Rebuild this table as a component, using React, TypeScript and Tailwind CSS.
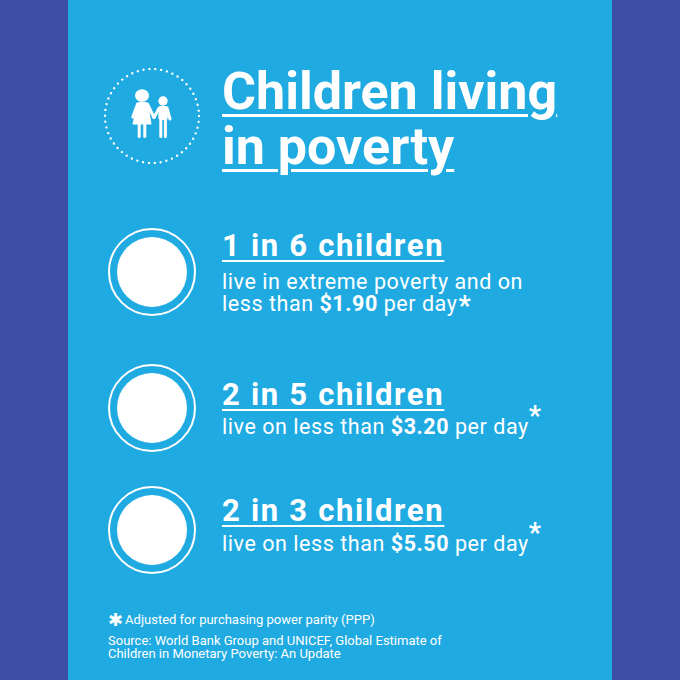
import React from "react";

const rows = [
  {
    head: "1 in 6 children",
    pre: "live in extreme poverty and on",
    pre2: "less than ",
    amount: "$1.90",
    rowMt: "mt-[54px]",
    textMt: "mt-[1px]",
    descMt: "mt-[8px]",
    star: "top-[4px] ml-[1px]",
  },
  {
    head: "2 in 5 children",
    pre: null,
    pre2: "live on less than ",
    amount: "$3.20",
    rowMt: "mt-[48px]",
    textMt: "mt-[14px]",
    descMt: "mt-[4px]",
    star: "-top-[9px]",
  },
  {
    head: "2 in 3 children",
    pre: null,
    pre2: "live on less than ",
    amount: "$5.50",
    rowMt: "mt-[34px]",
    textMt: "mt-[8px]",
    descMt: "mt-[5px]",
    star: "-top-[9px]",
  },
];

const ChildrenIcon = () => {
  const c = 2 * Math.PI * 47;
  return (
    <svg width="96" height="96" viewBox="0 0 96 96" className="shrink-0 mt-[4px]">
      {/* dotted ring */}
      <circle
        cx="48"
        cy="48"
        r="47"
        fill="none"
        stroke="#fff"
        strokeWidth="2.4"
        strokeLinecap="round"
        strokeDasharray={`0 ${c / 50}`}
      />
      <g fill="#fff" stroke="#fff" strokeLinecap="round">
        {/* girl */}
        <ellipse cx="38" cy="27.5" rx="7" ry="6.3" stroke="none" />
        <path d="M32.6 35 Q38.5 32.6 44.4 35 L47.5 56.5 L28.5 56.5 Z" stroke="none" />
        <line x1="33.6" y1="36" x2="28.8" y2="49" strokeWidth="3" />
        <line x1="43.4" y1="36" x2="50" y2="49.5" strokeWidth="3" />
        <line x1="35.2" y1="56" x2="35.2" y2="68.5" strokeWidth="3" />
        <line x1="40.8" y1="56" x2="40.8" y2="68.5" strokeWidth="3" />
        {/* boy */}
        <circle cx="59" cy="33" r="4.7" stroke="none" />
        <rect x="54.4" y="38" width="9.4" height="14" rx="2.2" stroke="none" />
        <line x1="55.2" y1="40" x2="50" y2="49.5" strokeWidth="3" />
        <line x1="63" y1="40" x2="66" y2="51" strokeWidth="3" />
        <line x1="56.8" y1="51" x2="56.8" y2="68.5" strokeWidth="3" />
        <line x1="61.4" y1="51" x2="61.4" y2="68.5" strokeWidth="3" />
      </g>
    </svg>
  );
};

const Ring = () => (
  <div className="w-[88px] h-[88px] shrink-0 rounded-full border-2 border-white flex items-center justify-center mx-[4px]">
    <div className="w-[70px] h-[70px] rounded-full bg-white" />
  </div>
);

export default function App() {
  return (
    <div className="w-[680px] h-[680px] bg-[#3d4da3] flex justify-center font-['Roboto',sans-serif]">
      <div className="w-[544px] h-full bg-[#20aae2] text-white pl-[36px] flex flex-col">
        {/* header */}
        <header className="flex items-start gap-[22px] mt-[64px]">
          <ChildrenIcon />
          <h1 className="text-[52px] leading-[55px] font-bold underline decoration-[3px] underline-offset-[5px]">
            Children living
            <br />
            in poverty
          </h1>
        </header>

        {/* stats */}
        {rows.map((r) => (
          <div key={r.head} className={`flex items-start gap-[22px] ${r.rowMt}`}>
            <Ring />
            <div className={r.textMt}>
              <h2 className="text-[31px] leading-[34px] font-bold tracking-[1.7px] underline decoration-2 underline-offset-[4px]">
                {r.head}
              </h2>
              <p className={`text-[21.5px] leading-[21.5px] tracking-[0.55px] ${r.descMt}`}>
                {r.pre && (
                  <>
                    {r.pre}
                    <br />
                  </>
                )}
                {r.pre2}
                <span className="font-bold">{r.amount}</span> per day
                <span className={`relative font-bold text-[27px] leading-[0px] ${r.star}`}>*</span>
              </p>
            </div>
          </div>
        ))}

        {/* footnotes */}
        <footer className="ml-[4px] mt-[38px] text-[13px] leading-[12.5px]">
          <p className="flex items-center gap-[2px] h-[16px]">
            <span className="font-['DejaVu_Sans',sans-serif] text-[18px] leading-none font-bold">✱</span>
            Adjusted for purchasing power parity (PPP)
          </p>
          <p className="mt-[7px]">
            Source: World Bank Group and UNICEF, Global Estimate of
            <br />
            Children in Monetary Poverty: An Update
          </p>
        </footer>
      </div>
    </div>
  );
}
